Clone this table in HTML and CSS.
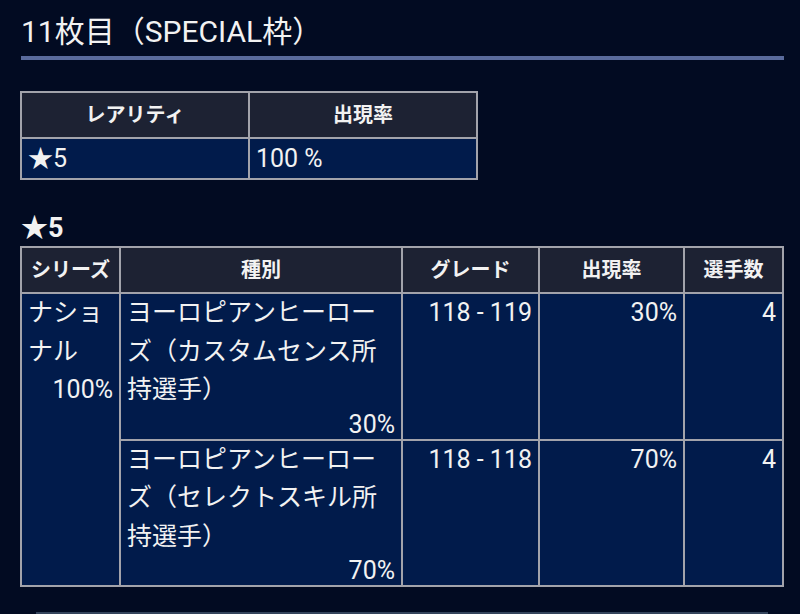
FILE: index.html
```html
<!DOCTYPE html>
<html lang="ja">
<head>
<meta charset="utf-8">
<link rel="stylesheet" href="styles.css">
</head>
<body>
<div class="page">
  <h2 class="title">11枚目（SPECIAL枠）</h2>
  <table class="tbl tbl-small">
    <colgroup><col class="half"><col class="half"></colgroup>
    <thead>
      <tr><th>レアリティ</th><th>出現率</th></tr>
    </thead>
    <tbody>
      <tr><td>★5</td><td>100 %</td></tr>
    </tbody>
  </table>
  <h3 class="rarity">★5</h3>
  <table class="tbl tbl-big">
    <colgroup>
      <col class="c-series"><col class="c-kind"><col class="c-grade"><col class="c-rate"><col class="c-num">
    </colgroup>
    <thead>
      <tr><th>シリーズ</th><th>種別</th><th>グレード</th><th>出現率</th><th>選手数</th></tr>
    </thead>
    <tbody>
      <tr>
        <td rowspan="2"><div class="line">ナショナル</div><div class="line right">100%</div></td>
        <td><div class="line">ヨーロピアンヒーローズ（カスタムセンス所持選手）</div><div class="pct">30%</div></td>
        <td class="right">118 - 119</td>
        <td class="right">30%</td>
        <td class="right">4</td>
      </tr>
      <tr>
        <td><div class="line">ヨーロピアンヒーローズ（セレクトスキル所持選手）</div><div class="pct">70%</div></td>
        <td class="right">118 - 118</td>
        <td class="right">70%</td>
        <td class="right">4</td>
      </tr>
    </tbody>
  </table>
  <div class="next-bar"></div>
</div>
</body>
</html>
```

FILE: styles.css
```css
html, body {
  margin: 0;
  padding: 0;
  background: #020b22;
}
body {
  width: 800px;
  height: 614px;
  overflow: hidden;
  font-family: Roboto, "Noto Sans CJK JP", sans-serif;
  color: #f2f2f2;
}
.page {
  padding: 12px 16px 0 21px;
}
.title {
  margin: 0;
  font-size: 30px;
  font-weight: 400;
  line-height: 40px;
  padding-bottom: 4px;
  border-bottom: 4px solid #5a6b9c;
}
.tbl {
  border-collapse: collapse;
  table-layout: fixed;
  border: 2px solid #a2a3ab;
}
.tbl-small {
  margin-top: 31px;
  width: 458px;
  margin-left: -1px;
}
.tbl-big {
  width: 764px;
  margin-left: -1px;
}
.half { width: 228px; }
.c-series { width: 99px; }
.c-kind { width: 282px; }
.c-grade { width: 137px; }
.c-rate { width: 145px; }
.c-num { width: 99px; }
.tbl th, .tbl td {
  border: 2px solid #a2a3ab;
}
.tbl th {
  background: #1d2233;
  font-size: 20px;
  font-weight: 700;
  line-height: 30px;
  padding: 7px 6px;
  text-align: center;
}
.tbl td {
  background: #011b4b;
  font-size: 25px;
  line-height: 38.5px;
  padding: 0 6px;
  vertical-align: top;
  text-align: left;
}
.tbl-small td {
  line-height: 39px;
}
.tbl td.right, .tbl .right {
  text-align: right;
}
.line {
  line-height: 38.5px;
}
.pct {
  text-align: right;
  line-height: 29px;
}
.rarity {
  margin: 30px 0 0;
  font-size: 27px;
  font-weight: 700;
  line-height: 36px;
}
.next-bar {
  margin: 25px 0 0 15px;
  width: 732px;
  height: 8px;
  background: #34445c;
}
```
